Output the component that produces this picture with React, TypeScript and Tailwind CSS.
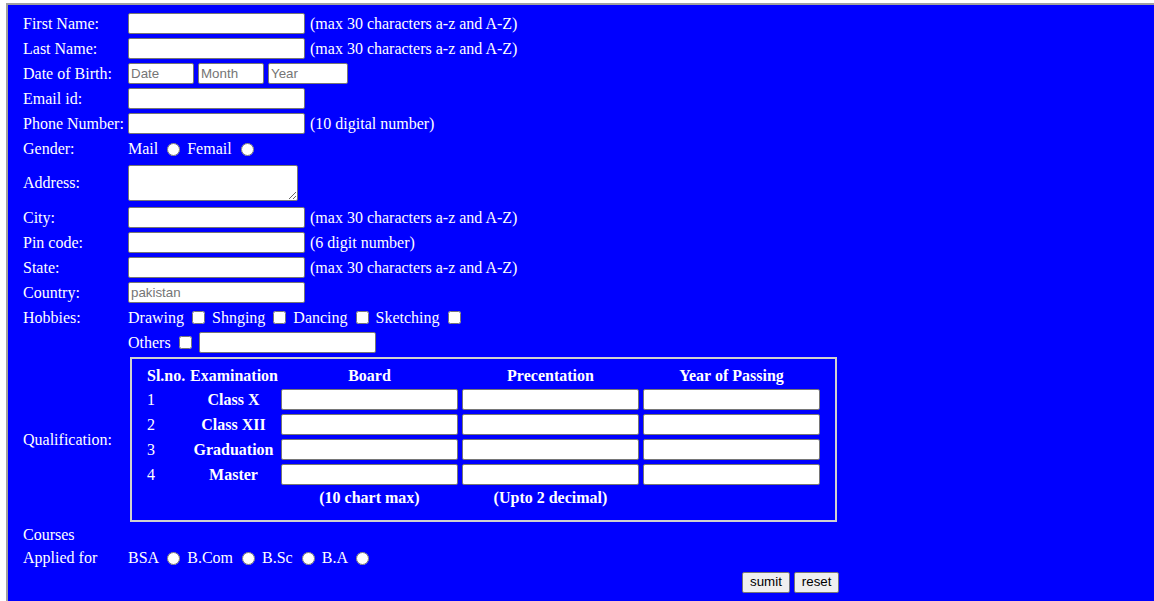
import type { ReactNode } from 'react'

const field =
  'h-[21px] rounded-[2px] border border-[#767676] bg-white px-[2px] font-["Liberation_Sans",Arial,sans-serif] text-[13.33px] text-black placeholder:text-[#757575] outline-none'
const input = `${field} w-[177px]`
const radio = 'ml-[5px] mr-[3px] mt-[1px] h-[13px] w-[13px] align-baseline'
const check = 'mx-[3px] ml-[4px] my-[3px] h-[13px] w-[13px] align-baseline'

function Row({
  label,
  children,
  className = 'h-[25px]',
}: {
  label: ReactNode
  children?: ReactNode
  className?: string
}) {
  return (
    <div className={`flex items-center ${className}`}>
      <div className="w-[105px] shrink-0">{label}</div>
      <div className="flex items-center whitespace-pre">{children}</div>
    </div>
  )
}

function Hint({ children }: { children: ReactNode }) {
  return <span className="ml-[5px]">{children}</span>
}

const exams = ['Class X', 'Class XII', 'Graduation', 'Master']

function QualificationTable() {
  return (
    <div className="my-[2px] border-2 border-[#d0d0d0] px-[15px] pb-[12px] pt-[6px]">
      <div className="grid grid-cols-[39px_87px_177px_177px_177px] gap-x-[4px] font-bold">
        <div className="flex h-[22px] items-center">Sl.no.</div>
        <div className="flex h-[22px] items-center">Examination</div>
        <div className="flex h-[22px] items-center justify-center">Board</div>
        <div className="flex h-[22px] items-center justify-center">
          Precentation
        </div>
        <div className="flex h-[22px] items-center justify-center">
          Year of Passing
        </div>
        {exams.map((exam, i) => (
          <div key={exam} className="contents">
            <div className="flex h-[25px] items-center font-normal">{i + 1}</div>
            <div className="flex h-[25px] items-center justify-center">
              {exam}
            </div>
            <div className="flex h-[25px] items-center">
              <input className={input} />
            </div>
            <div className="flex h-[25px] items-center">
              <input className={input} />
            </div>
            <div className="flex h-[25px] items-center">
              <input className={input} />
            </div>
          </div>
        ))}
        <div />
        <div />
        <div className="flex h-[21px] items-center justify-center">
          (10 chart max)
        </div>
        <div className="flex h-[21px] items-center justify-center">
          (Upto 2 decimal)
        </div>
        <div />
      </div>
    </div>
  )
}

export default function App() {
  return (
    <div className="h-[601px] overflow-hidden bg-white pl-[6px] pt-[3px]">
      <div className='h-[620px] border-l-2 border-t-2 border-[#a0a0a0] bg-[#0000ff] pl-[15px] pt-[6px] font-["Liberation_Serif","Times_New_Roman",serif] text-[16px] leading-[18px] text-white'>
        <Row label="First Name:">
          <input className={input} />
          <Hint>(max 30 characters a-z and A-Z)</Hint>
        </Row>
        <Row label="Last Name:">
          <input className={input} />
          <Hint>(max 30 characters a-z and A-Z)</Hint>
        </Row>
        <Row label="Date of Birth:">
          <input className={`${field} w-[66px]`} placeholder="Date" />
          <input className={`${field} ml-[4px] w-[66px]`} placeholder="Month" />
          <input className={`${field} ml-[4px] w-[80px]`} placeholder="Year" />
        </Row>
        <Row label="Email id:">
          <input className={input} />
        </Row>
        <Row label="Phone Number:">
          <input className={input} />
          <Hint>(10 digital number)</Hint>
        </Row>
        <Row label="Gender:">
          <span>Mail </span>
          <input type="radio" name="g" className={radio} />
          <span> Femail </span>
          <input type="radio" name="g" className={radio} />
        </Row>
        <Row label="Address:" className="h-[44px]">
          <textarea className="h-[36px] w-[170px] resize rounded-[2px] border border-[#767676] bg-white outline-none" />
        </Row>
        <Row label="City:">
          <input className={input} />
          <Hint>(max 30 characters a-z and A-Z)</Hint>
        </Row>
        <Row label="Pin code:">
          <input className={input} />
          <Hint>(6 digit number)</Hint>
        </Row>
        <Row label="State:">
          <input className={input} />
          <Hint>(max 30 characters a-z and A-Z)</Hint>
        </Row>
        <Row label="Country:">
          <input className={input} placeholder="pakistan" />
        </Row>
        <Row label="Hobbies:">
          <span>Drawing </span>
          <input type="checkbox" className={check} />
          <span> Shnging </span>
          <input type="checkbox" className={check} />
          <span> Dancing </span>
          <input type="checkbox" className={check} />
          <span> Sketching </span>
          <input type="checkbox" className={check} />
        </Row>
        <Row label="">
          <span>Others </span>
          <input type="checkbox" className={check} />
          <input className={`${input} ml-[4px]`} />
        </Row>
        <div className="flex items-center">
          <div className="w-[107px] shrink-0">Qualification:</div>
          <QualificationTable />
        </div>
        <div className="flex h-[22px] items-center">Courses</div>
        <Row label="Applied for" className="h-[24px]">
          <span>BSA </span>
          <input type="radio" name="c" className={radio} />
          <span> B.Com </span>
          <input type="radio" name="c" className={radio} />
          <span> B.Sc </span>
          <input type="radio" name="c" className={radio} />
          <span> B.A </span>
          <input type="radio" name="c" className={radio} />
        </Row>
        <div className='flex h-[24px] items-center gap-[4px] pl-[719px] font-["Liberation_Sans",Arial,sans-serif] text-[13.33px] text-black'>
          <button className="h-[21px] rounded-[2px] border border-[#767676] bg-[#efefef] px-[7px]">
            sumit
          </button>
          <button className="h-[21px] rounded-[2px] border border-[#767676] bg-[#efefef] px-[7px]">
            reset
          </button>
        </div>
      </div>
    </div>
  )
}
